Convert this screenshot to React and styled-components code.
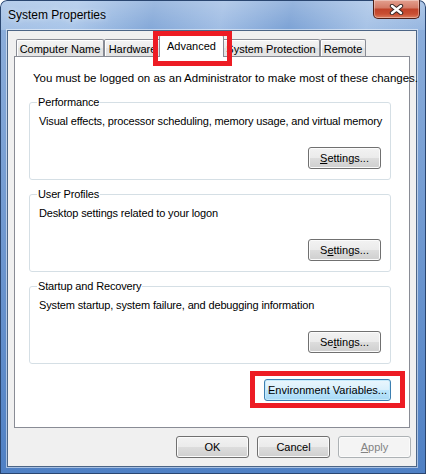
import React from 'react';
import styled, { createGlobalStyle, css } from 'styled-components';

const GlobalStyle = createGlobalStyle`
  html, body {
    margin: 0;
    padding: 0;
    background: #fff;
  }
  body {
    font-family: "Liberation Sans", Arial, sans-serif;
    font-size: 11px;
    color: #000;
  }
  * {
    box-sizing: border-box;
  }
`;

const Window = styled.div`
  width: 426px;
  height: 474px;
  display: flex;
  flex-direction: column;
  border-radius: 7px 7px 0 0;
  overflow: hidden;
  box-shadow: inset 0 0 0 1px #2a4670;
  background:
    linear-gradient(to bottom, rgba(255, 255, 255, 0.22), rgba(255, 255, 255, 0) 30px),
    linear-gradient(100deg, #a3c0e5 0%, #aac6e9 18%, #84a8d8 36%, #a0bde4 52%, #7ca2d5 68%, #a6c2e6 86%, #96b6e0 100%)
      top / 100% 30px no-repeat,
    linear-gradient(to bottom, #8fb0dc, #4f80c4);
`;

const TitleBar = styled.div`
  height: 30px;
  flex: none;
  display: flex;
  align-items: flex-start;
  justify-content: space-between;
`;

const Title = styled.div`
  padding: 8px 0 0 8px;
  font-size: 12px;
  line-height: 15px;
  color: #000;
  text-shadow: 0 0 6px rgba(255, 255, 255, 0.8);
`;

const CloseButton = styled.div`
  width: 47px;
  height: 19px;
  margin-right: 6px;
  border: 1px solid #4e1f17;
  border-top: none;
  border-radius: 0 0 5px 5px;
  background: linear-gradient(to bottom, #e3a08f 0%, #d47c68 42%, #c0432a 52%, #c94f33 78%, #dc7e60 100%);
  box-shadow: inset 0 0 0 1px rgba(255, 255, 255, 0.35);
  display: flex;
  align-items: center;
  justify-content: center;
`;

const Client = styled.div`
  flex: 1;
  margin: 0 9px 7px 7px;
  background: #f0f0f0;
  border: 1px solid #4c6586;
  box-shadow: 0 0 0 1px rgba(255, 255, 255, 0.5);
  padding: 5px 6px 8px 6px;
  display: flex;
  flex-direction: column;
`;

const TabRow = styled.div`
  height: 20px;
  flex: none;
  display: flex;
  align-items: flex-end;
  padding-left: 2px;
  position: relative;
  z-index: 1;
`;

const Tab = styled.div`
  position: relative;
  width: ${(p) => p.$w}px;
  height: 17px;
  padding-top: 3px;
  border: 1px solid #898c95;
  border-bottom: none;
  border-radius: 2px 2px 0 0;
  text-align: center;
  line-height: 13px;
  white-space: nowrap;
  overflow: hidden;
  background: linear-gradient(to bottom, #f4f4f4 0%, #ececec 50%, #e2e2e2 51%, #e4e4e4 100%);
  box-shadow: inset 1px 1px 0 #fff;

  ${(p) =>
    p.$active &&
    css`
      height: 22px;
      padding-top: 4px;
      margin: 0 -2px -1px;
      background: #fff;
      box-shadow: none;
      overflow: visible;
      z-index: 2;
    `}
`;

const Highlight = styled.div`
  position: absolute;
  left: ${(p) => p.$x}px;
  top: ${(p) => p.$y}px;
  width: ${(p) => p.$w}px;
  height: ${(p) => p.$h}px;
  border: 5px solid #ed1c24;
  pointer-events: none;
  z-index: 3;
`;

const Panel = styled.div`
  height: 372px;
  flex: none;
  border: 1px solid #898c95;
  background: #fff;
  padding: 15px 18px 0 14px;
  display: flex;
  flex-direction: column;
`;

const Intro = styled.div`
  padding-left: 4px;
  font-size: 11.5px;
  line-height: 13px;
  white-space: nowrap;
`;

const GroupBox = styled.fieldset`
  margin: ${(p) => (p.$first ? 11 : 8)}px 0 0;
  padding: 0 9px 10px 9px;
  border: 1px solid #d5dfe5;
  border-radius: 3px;
  min-width: 0;
  display: flex;
  flex-direction: column;
`;

const Legend = styled.legend`
  padding: 0 1px;
  margin-left: -2px;
  line-height: 13px;
  letter-spacing: -0.15px;
`;

const GroupText = styled.div`
  margin-top: 6px;
  line-height: 13px;
  letter-spacing: -0.15px;
  white-space: nowrap;
`;

const ButtonRow = styled.div`
  display: flex;
  justify-content: flex-end;
  margin-top: 19px;
`;

const EnvWrap = styled.div`
  position: relative;
  align-self: flex-end;
  margin-top: 15px;
`;

const Button = styled.button`
  width: ${(p) => p.$w || 73}px;
  height: 22px;
  padding: 0;
  font-family: "Liberation Sans", Arial, sans-serif;
  font-size: 11px;
  line-height: 13px;
  color: #000;
  border: 1px solid #707070;
  border-radius: 3px;
  background: linear-gradient(to bottom, #f2f2f2 0%, #ebebeb 49%, #dddddd 50%, #cfcfcf 100%);
  box-shadow: inset 0 0 0 1px #fbfbfb;

  u {
    text-decoration: underline;
    text-underline-offset: 1px;
  }

  ${(p) =>
    p.$default &&
    css`
      border-color: #3c7fb1;
      background: linear-gradient(to bottom, #eaf6fd 0%, #d9f0fc 49%, #bee6fd 50%, #a7d9f5 100%);
      box-shadow: inset 0 0 0 1px #c5eafb;
    `}

  &:disabled {
    color: #838383;
    border-color: #adb2b5;
    background: #f4f4f4;
    box-shadow: inset 0 0 0 1px #fbfbfb;
  }
`;

const Footer = styled.div`
  display: flex;
  justify-content: flex-end;
  gap: 8px;
  margin-top: 8px;
  margin-right: -1px;
`;

const tabs = [
  { label: 'Computer Name', w: 88 },
  { label: 'Hardware', w: 57 },
  { label: 'Advanced', w: 65, active: true },
  { label: 'System Protection', w: 98 },
  { label: 'Remote', w: 46 },
];

const groups = [
  {
    title: 'Performance',
    text: 'Visual effects, processor scheduling, memory usage, and virtual memory',
    button: (
      <>
        <u>S</u>ettings...
      </>
    ),
  },
  {
    title: 'User Profiles',
    text: 'Desktop settings related to your logon',
    button: (
      <>
        S<u>e</u>ttings...
      </>
    ),
  },
  {
    title: 'Startup and Recovery',
    text: 'System startup, system failure, and debugging information',
    button: (
      <>
        Se<u>t</u>tings...
      </>
    ),
  },
];

const CloseIcon = () => (
  <svg width="15" height="11" viewBox="0 0 15 11">
    <path d="M3 2 L12 9 M12 2 L3 9" stroke="#3a2a28" strokeWidth="4.4" strokeLinecap="round" />
    <path d="M3 2 L12 9 M12 2 L3 9" stroke="#fff" strokeWidth="2.4" strokeLinecap="round" />
  </svg>
);

export default function App() {
  return (
    <>
      <GlobalStyle />
      <Window>
        <TitleBar>
          <Title>System Properties</Title>
          <CloseButton>
            <CloseIcon />
          </CloseButton>
        </TitleBar>
        <Client>
          <TabRow>
            {tabs.map((t) => (
              <Tab key={t.label} $w={t.w} $active={t.active}>
                {t.label}
                {t.active && <Highlight $x={-7} $y={-5} $w={79} $h={35} />}
              </Tab>
            ))}
          </TabRow>
          <Panel>
            <Intro>You must be logged on as an Administrator to make most of these changes.</Intro>
            {groups.map((g, i) => (
              <GroupBox key={g.title} $first={i === 0}>
                <Legend>{g.title}</Legend>
                <GroupText>{g.text}</GroupText>
                <ButtonRow>
                  <Button>{g.button}</Button>
                </ButtonRow>
              </GroupBox>
            ))}
            <EnvWrap>
              <Button $default $w={127}>
                Environment Variables...
              </Button>
              <Highlight $x={-14} $y={-8} $w={155} $h={37} />
            </EnvWrap>
          </Panel>
          <Footer>
            <Button>OK</Button>
            <Button>Cancel</Button>
            <Button disabled>
              <u>A</u>pply
            </Button>
          </Footer>
        </Client>
      </Window>
    </>
  );
}
